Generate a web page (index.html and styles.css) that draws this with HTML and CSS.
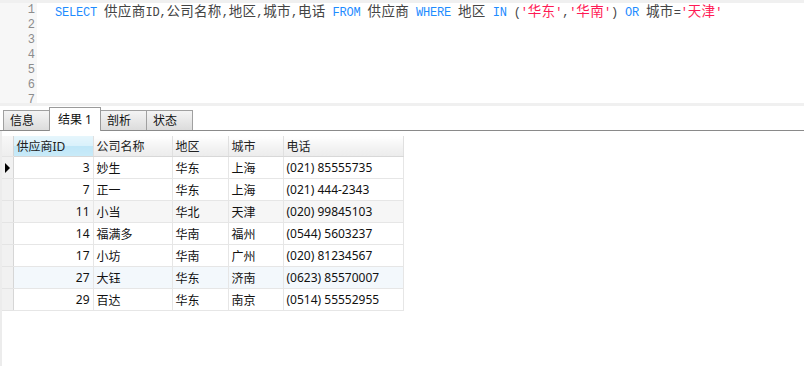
FILE: index.html
```html
<!DOCTYPE html>
<html lang="zh-CN">
<head>
    <meta charset="UTF-8">
    <title>查询</title>
    <link rel="stylesheet" href="styles.css">
</head>
<body>
    <div class="editor">
        <div class="gutter">
            <div class="num">1</div>
            <div class="num">2</div>
            <div class="num">3</div>
            <div class="num">4</div>
            <div class="num">5</div>
            <div class="num">6</div>
            <div class="num">7</div>
        </div>
        <div class="code">
            <div class="line"><span class="kw">SELECT</span> <span class="zh">供应商</span>ID,<span class="zh">公司名称</span>,<span class="zh">地区</span>,<span class="zh">城市</span>,<span class="zh">电话</span> <span class="kw">FROM</span> <span class="zh">供应商</span> <span class="kw">WHERE</span> <span class="zh">地区</span> <span class="kw">IN</span> (<span class="str">'<span class="zh">华东</span>'</span>,<span class="str">'<span class="zh">华南</span>'</span>) <span class="kw">OR</span> <span class="zh">城市</span>=<span class="str">'<span class="zh">天津</span>'</span></div>
        </div>
    </div>
    <div class="split"></div>

    <div class="tabbar">
        <div class="tab">信息</div>
        <div class="tab active">结果 1</div>
        <div class="tab">剖析</div>
        <div class="tab">状态</div>
    </div>

    <div class="results">
        <table class="grid">
            <colgroup>
                <col class="c-ind">
                <col class="c-id">
                <col class="c-name">
                <col class="c-area">
                <col class="c-city">
                <col class="c-tel">
            </colgroup>
            <thead>
                <tr>
                    <th class="ind"></th>
                    <th class="sorted">供应商ID</th>
                    <th>公司名称</th>
                    <th>地区</th>
                    <th>城市</th>
                    <th>电话</th>
                </tr>
            </thead>
            <tbody>
                <tr>
                    <td class="ind"><span class="caret"></span></td>
                    <td class="num-cell">3</td><td>妙生</td><td>华东</td><td>上海</td><td>(021) 85555735</td>
                </tr>
                <tr>
                    <td class="ind"></td>
                    <td class="num-cell">7</td><td>正一</td><td>华东</td><td>上海</td><td>(021) 444-2343</td>
                </tr>
                <tr class="alt">
                    <td class="ind"></td>
                    <td class="num-cell">11</td><td>小当</td><td>华北</td><td>天津</td><td>(020) 99845103</td>
                </tr>
                <tr>
                    <td class="ind"></td>
                    <td class="num-cell">14</td><td>福满多</td><td>华南</td><td>福州</td><td>(0544) 5603237</td>
                </tr>
                <tr>
                    <td class="ind"></td>
                    <td class="num-cell">17</td><td>小坊</td><td>华南</td><td>广州</td><td>(020) 81234567</td>
                </tr>
                <tr class="hover">
                    <td class="ind"></td>
                    <td class="num-cell">27</td><td>大钰</td><td>华东</td><td>济南</td><td>(0623) 85570007</td>
                </tr>
                <tr>
                    <td class="ind"></td>
                    <td class="num-cell">29</td><td>百达</td><td>华东</td><td>南京</td><td>(0514) 55552955</td>
                </tr>
            </tbody>
        </table>
    </div>
</body>
</html>
```

FILE: styles.css
```css
html, body {
    margin: 0;
    padding: 0;
    background: #fff;
    width: 804px;
    height: 366px;
    overflow: hidden;
}

body {
    font-family: "Noto Sans", "Noto Sans CJK SC", sans-serif;
    font-size: 12px;
    color: #111;
}

/* sql editor */
.editor {
    display: flex;
    height: 100px;
    border-top: 3px solid #f0f0f0;
    overflow: hidden;
}

.gutter {
    width: 37px;
    flex: none;
    background-color: #f7f7f7;
    box-sizing: border-box;
    padding-right: 2px;
    text-align: right;
    color: #8c8c8c;
    font-family: "Liberation Mono", monospace;
    font-size: 12px;
}

.num {
    height: 15px;
    line-height: 15px;
}

.code {
    padding-left: 18px;
    font-family: "Liberation Mono", monospace;
    font-size: 12px;
    letter-spacing: -0.2px;
    color: #444;
}

.line {
    height: 15px;
    line-height: 15px;
    white-space: pre;
}

.zh {
    font-family: "Noto Sans CJK SC", sans-serif;
    font-size: 13.5px;
    line-height: 15px;
    letter-spacing: 0.3px;
}

.kw {
    color: #1e8cff;
}

.str {
    color: #ff1a55;
}

.split {
    height: 3px;
    background-color: #f0f0f0;
}

/* result tabs */
.tabbar {
    display: flex;
    align-items: flex-end;
    height: 24px;
    padding-left: 3px;
    border-bottom: 1px solid #8a8a8a;
}

.tab {
    height: 19px;
    line-height: 19px;
    padding: 0 6px;
    margin-right: -1px;
    border: 1px solid #a0a0a0;
    border-bottom: none;
    background: linear-gradient(#f4f4f4, #dcdcdc);
    font-size: 12px;
    color: #111;
    min-width: 33px;
}

.tab.active {
    height: 23px;
    line-height: 23px;
    background: #fff;
    margin-bottom: -1px;
    border-color: #9a9a9a;
    padding: 0 8px;
    position: relative;
}

/* data grid */
.results {
    height: 235px;
    border-left: 2px solid #ececec;
    padding-top: 5px;
}

.grid {
    border-collapse: collapse;
    table-layout: fixed;
    width: 401px;
}

.c-ind { width: 11px; }
.c-id { width: 80px; }
.c-name { width: 79px; }
.c-area { width: 56px; }
.c-city { width: 55px; }
.c-tel { width: 120px; }

.grid th,
.grid td {
    padding: 0 3px;
    white-space: nowrap;
    overflow: hidden;
    text-align: left;
    font-weight: normal;
    border: 1px solid #e6e6e6;
}

.grid th {
    height: 20px;
    color: #222;
    background: linear-gradient(#ffffff, #f2f2f2 60%, #ececec);
    border-right-color: #e0e0e0;
    border-bottom-color: #d8d8d8;
    border-top: none;
}

.grid th.sorted {
    background: linear-gradient(#e6f6fc, #d9f1fb 50%, #bfe6f7 51%, #c8eaf8);
}

.grid td {
    height: 21px;
}

.grid .ind {
    padding: 0;
    background: #f1f1f1;
    border-left: none;
    border-right: 1px solid #d6d6d6;
    border-bottom-color: #e4e4e4;
}

.grid th.ind {
    background: linear-gradient(#f8f8f8, #eeeeee);
}

.num-cell {
    text-align: right !important;
}

.grid tr.alt td {
    background-color: #f6f6f6;
}

.grid tr.hover td {
    background-color: #f3f8fc;
}

.grid tr.alt td.ind,
.grid tr.hover td.ind {
    background: #f1f1f1;
}

.caret {
    display: block;
    width: 0;
    height: 0;
    margin-left: 3px;
    border-top: 5px solid transparent;
    border-bottom: 5px solid transparent;
    border-left: 5px solid #000;
}
```
